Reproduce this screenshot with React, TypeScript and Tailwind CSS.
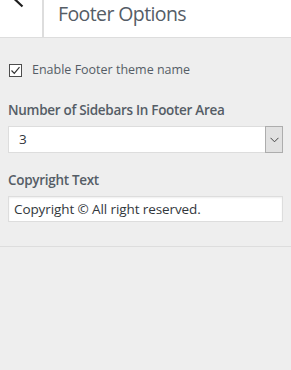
import React from 'react'

const App: React.FC = () => {
  return (
    <div
      className="w-[291px] h-[370px] bg-[#eeeeee] overflow-hidden flex flex-col"
      style={{ fontFamily: '"Open Sans", "Noto Sans", sans-serif' }}
    >
      <div className="h-[38px] shrink-0 bg-white border-b border-[#dddddd] flex">
        <div className="w-[44px] h-full border-r-[2px] border-[#dddddd] shrink-0">
          <svg width="42" height="37" viewBox="0 0 42 37">
            <path d="M23 -9 L14.5 -1 L22.5 6.5" fill="none" stroke="#1e1e1e" strokeWidth="2.2" />
          </svg>
        </div>
        <h1 className="pl-[14px] text-[19.5px] tracking-[-0.6px] leading-[28px] text-[#555d66] font-normal">
          Footer Options
        </h1>
      </div>

      <div className="px-2 pt-[24px]">
        <label className="flex items-center gap-[10px] pl-[1px]">
          <span className="w-[13px] h-[13px] border border-[#4d4d4d] bg-white flex items-center justify-center">
            <svg width="11" height="11" viewBox="0 0 11 11">
              <path d="M1.5 5.5 L4.3 8.3 L9.5 2.2" fill="none" stroke="#333" strokeWidth="1.2" />
            </svg>
          </span>
          <span className="text-[12.5px] leading-[16px] text-[#555d66]">Enable Footer theme name</span>
        </label>

        <div className="mt-[22px] text-[13.5px] tracking-[-0.3px] leading-[20px] font-semibold text-[#555d66]">
          Number of Sidebars In Footer Area
        </div>
        <div className="mt-[6px] h-[27px] flex bg-white border border-[#dddddd]">
          <span className="flex-1 pl-[10px] text-[13.5px] leading-[25px] text-[#32373c]">3</span>
          <span className="w-[18px] -my-px -mr-px border border-[#adadad] bg-[#e1e1e1] flex items-center justify-center">
            <svg width="9" height="6" viewBox="0 0 9 6">
              <path d="M0.5 0.8 L4.5 4.8 L8.5 0.8" fill="none" stroke="#444" strokeWidth="1" />
            </svg>
          </span>
        </div>

        <div className="mt-[17px] text-[13.5px] tracking-[-0.3px] leading-[20px] font-semibold text-[#555d66]">
          Copyright Text
        </div>
        <div className="mt-[6px] h-[26px] bg-white border border-[#dddddd] shadow-[inset_0_1px_2px_rgba(0,0,0,0.07)] pl-[5px] text-[13.5px] tracking-[-0.1px] leading-[24px] text-[#32373c]">
          Copyright © All right reserved.
        </div>
      </div>

      <div className="mt-[24px] border-t border-[#dddddd]" />
    </div>
  )
}

export default App
